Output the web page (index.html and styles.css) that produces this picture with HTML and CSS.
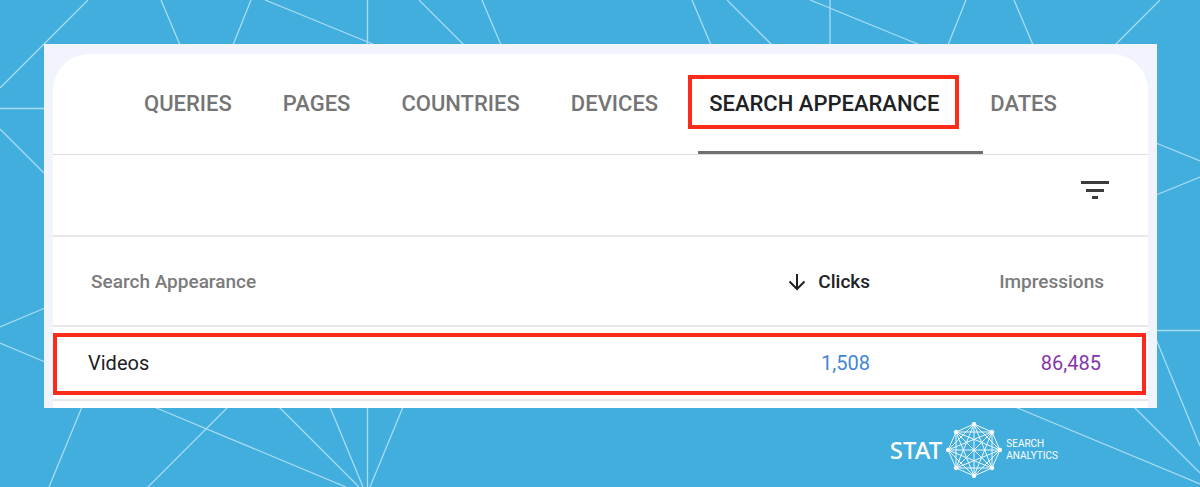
FILE: index.html
```html
<!DOCTYPE html>
<html lang="en">
<head>
    <meta charset="UTF-8">
    <meta name="viewport" content="width=device-width, initial-scale=1.0">
    <title>Search Appearance</title>
    <link rel="stylesheet" href="styles.css">
</head>
<body>
    <svg class="bg-lines" viewBox="0 0 1200 487" preserveAspectRatio="xMidYMid slice" aria-hidden="true">
        <path d="M0 88L88 0M161 0l19 45M251 0l-18 45M265 0l110 45M419 0l45 45M482 0l19 45M692 0l19 45M727 0l45 45M810 0l110 45M966 0l-18 45M1014 0l19 45M1160 0l-45 45"/>
        <path d="M367.500 0v45M830 0v45M0 108.500h45M1156 330.500h44M367.500 407v80"/>
        <path d="M1156 143l44 18M1156 195l44-18M1156 339l44 107M1134 407l66 66M1015 407l185 77"/>
        <path d="M0 129l45 45M0 327l45-19M0 343l45 19"/>
        <path d="M82 407l-33 80M154 407l192 80M228 407l-80 80M279 407l80 80M330 407l33 80M403 407l-33 80"/>
    </svg>

    <main class="panel">
        <div class="card">
            <nav class="tabs">
                <button class="tab" type="button">QUERIES</button>
                <button class="tab" type="button">PAGES</button>
                <button class="tab" type="button">COUNTRIES</button>
                <button class="tab" type="button">DEVICES</button>
                <button class="tab active" type="button">SEARCH APPEARANCE</button>
                <button class="tab" type="button">DATES</button>
            </nav>

            <div class="toolbar">
                <button class="filter-btn" type="button" aria-label="Filter">
                    <svg width="30" height="20" viewBox="0 0 30 20">
                        <path d="M1 1h28v3H1zM6 9h18v3H6zM12 16h6v3h-6z" fill="#3c3c3c"/>
                    </svg>
                </button>
            </div>

            <table class="results">
                <thead>
                    <tr>
                        <th class="name">Search Appearance</th>
                        <th class="clicks">
                            <svg class="arrow" width="18" height="18" viewBox="0 0 18 18" aria-hidden="true">
                                <path d="M9 1v15M1.500 8.500L9 16l7.500-7.500" fill="none" stroke="#202124" stroke-width="2"/>
                            </svg>
                            Clicks
                        </th>
                        <th class="impressions">Impressions</th>
                    </tr>
                </thead>
                <tbody>
                    <tr>
                        <td class="name">Videos</td>
                        <td class="clicks">1,508</td>
                        <td class="impressions">86,485</td>
                    </tr>
                </tbody>
            </table>
        </div>
    </main>

    <footer class="brand">
        <span class="brand-name">STAT</span>
        <svg class="globe" width="56" height="56" viewBox="-28 -28 56 56" aria-hidden="true">
            <path d="M0-26L18-18L26 0L18 18L0 26L-18 18L-26 0L-18-18Z"/>
            <path d="M0-26L26 0L0 26L-26 0ZM18-18V18H-18V-18Z"/>
            <path d="M0-26L18 18L-26 0L18-18L0 26L-18-18L26 0L-18 18Z"/>
            <path d="M0-26V26M-26 0H26M-18-18L18 18M18-18L-18 18"/>
            <g class="dots">
                <circle cy="-26" r="1.800"/>
                <circle cx="18" cy="-18" r="1.800"/>
                <circle cx="26" r="1.800"/>
                <circle cx="18" cy="18" r="1.800"/>
                <circle cy="26" r="1.800"/>
                <circle cx="-18" cy="18" r="1.800"/>
                <circle cx="-26" r="1.800"/>
                <circle cx="-18" cy="-18" r="1.800"/>
            </g>
        </svg>
        <span class="brand-sub">SEARCH<br>ANALYTICS</span>
    </footer>
</body>
</html>
```

FILE: styles.css
```css
* {
    box-sizing: border-box;
}
body {
    font-family: Roboto, "Liberation Sans", sans-serif;
    margin: 0;
    min-height: 100vh;
    position: relative;
    overflow-x: hidden;
    background-color: #42aedd;
    color: #202124;
}
button {
    font: inherit;
    color: inherit;
    background: none;
    border: none;
    padding: 0;
    cursor: pointer;
}

/* background */
.bg-lines {
    position: absolute;
    top: 0;
    left: 0;
    width: 100%;
    height: 100%;
    z-index: -1;
    fill: none;
    stroke: #a8dcf1;
    stroke-width: 1.3;
}

/* panel */
.panel {
    padding: 44px 43px 0 44px;
}
.card {
    background-color: #fff;
    border: 9px solid #f1f4fd;
    border-top-width: 10px;
    border-bottom: none;
    padding-bottom: 7px;
    position: relative;
}
.card::before {
    content: "";
    position: absolute;
    inset: 0 0 auto;
    height: 36px;
    background-color: #f1f4fd;
}

/* tabs */
.tabs {
    position: relative;
    display: flex;
    gap: 51px;
    height: 101px;
    padding-left: 91px;
    border-bottom: 1px solid #dedede;
    border-radius: 36px 36px 0 0;
    background-color: #fff;
}
.tab {
    position: relative;
    padding-bottom: 2px;
    font-size: 22px;
    font-weight: 500;
    color: #757575;
    white-space: nowrap;
}
.tab.active {
    color: #202124;
}
.tab.active::before {
    content: "";
    position: absolute;
    inset: 21px -20px 25px -21px;
    border: 4px solid #fc2b1c;
}
.tab.active::after {
    content: "";
    position: absolute;
    left: -11px;
    right: -44px;
    bottom: 0;
    height: 3px;
    background-color: #707070;
}

/* toolbar */
.toolbar {
    display: flex;
    align-items: center;
    justify-content: flex-end;
    height: 82px;
    padding: 0 38px 10px 0;
    border-bottom: 2px solid #e8e8e8;
}
.filter-btn svg {
    display: block;
}

/* table */
.results {
    width: 100%;
    border-collapse: separate;
    border-spacing: 0;
}
th, td {
    text-align: right;
    padding: 0;
    border-bottom: 2px solid #e8e8e8;
}
th {
    height: 90px;
    font-size: 19px;
    font-weight: 500;
    color: #7b7b7b;
}
td {
    height: 74px;
    font-size: 20px;
}
tbody tr {
    position: relative;
}
tbody tr::after {
    content: "";
    position: absolute;
    inset: 6px 2px 6px 0;
    border: 4px solid #fc2b1c;
}
.name {
    text-align: left;
}
th.name {
    padding-left: 38px;
}
td.name {
    padding-left: 35px;
}
.clicks {
    width: 200px;
}
th.clicks {
    color: #202124;
}
td.clicks {
    color: #3f87d6;
}
.arrow {
    vertical-align: -3px;
    margin-right: 8px;
}
.impressions {
    width: 278px;
}
th.impressions {
    padding-right: 44px;
}
td.impressions {
    padding-right: 47px;
    color: #8336a8;
}

/* brand */
.brand {
    display: flex;
    align-items: center;
    justify-content: flex-end;
    gap: 4px;
    padding: 14px 142px 9px 0;
    color: #fff;
}
.brand-name {
    font-family: "Noto Sans", sans-serif;
    font-size: 24px;
    font-weight: 500;
    line-height: 28px;
}
.globe {
    fill: none;
    stroke: #fff;
    stroke-width: 0.9;
}
.dots {
    fill: #fff;
}
.brand-sub {
    font-size: 10px;
    line-height: 12px;
}
```
